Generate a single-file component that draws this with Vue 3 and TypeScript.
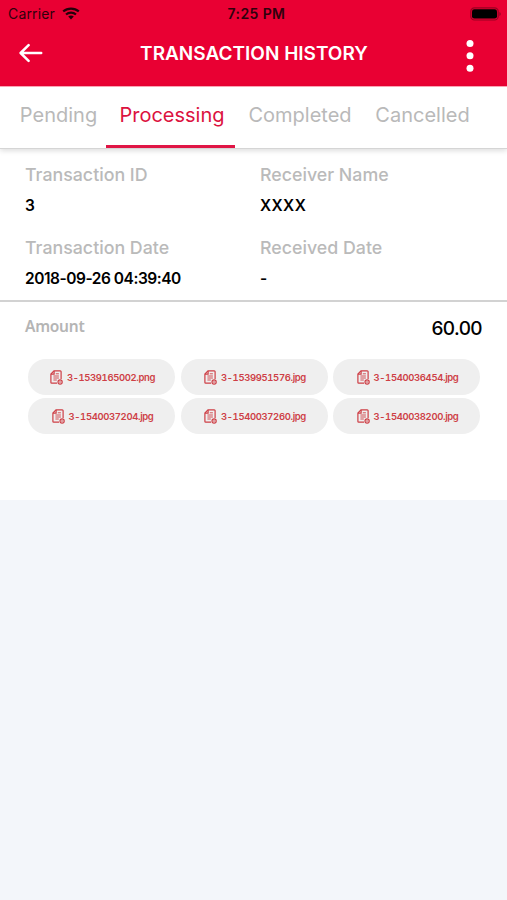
<script setup lang="ts">
import { ref } from 'vue'

interface Tab { key: string; label: string }
interface Field { key: string; label: string; value: string }

const tabs: Tab[] = [
  { key: 'pending', label: 'Pending' },
  { key: 'processing', label: 'Processing' },
  { key: 'completed', label: 'Completed' },
  { key: 'cancelled', label: 'Cancelled' },
]
const active = ref('processing')

const fields: Field[] = [
  { key: 'id', label: 'Transaction ID', value: '3' },
  { key: 'name', label: 'Receiver Name', value: 'XXXX' },
  { key: 'date', label: 'Transaction Date', value: '2018-09-26 04:39:40' },
  { key: 'received', label: 'Received Date', value: '-' },
]

const files: string[] = [
  '3-1539165002.png',
  '3-1539951576.jpg',
  '3-1540036454.jpg',
  '3-1540037204.jpg',
  '3-1540037260.jpg',
  '3-1540038200.jpg',
]
</script>

<template>
  <div class="screen">
    <header class="header">
      <div class="status">
        <div class="carrier">
          <span>Carrier</span>
          <svg class="wifi" viewBox="0 0 18 13" width="18" height="13">
            <path d="M1.2 4.4C5.6.6 12.4.6 16.8 4.4" />
            <path d="M4 7.5c2.8-2.5 7.2-2.5 10 0" />
            <path class="solid" d="M6.2 9.6c1.6-1.4 4-1.4 5.6 0L9 12.4z" />
          </svg>
        </div>
        <span class="clock">7:25 PM</span>
        <svg class="battery" viewBox="0 0 32 14" width="32" height="14">
          <rect class="case" x="0.8" y="0.8" width="27.4" height="12.2" rx="3.6" />
          <rect x="2" y="2.2" width="25" height="9.4" rx="2.4" />
          <path class="tip" d="M29.4 5v4c1.8-.6 1.8-3.4 0-4z" />
        </svg>
      </div>
      <div class="bar">
        <button class="icon-btn" aria-label="Back">
          <svg viewBox="0 0 24 20" width="24" height="20">
            <path class="arrow" d="M22.2 10H2M9.6 2.2 1.6 10l8 7.8" />
          </svg>
        </button>
        <h1>TRANSACTION HISTORY</h1>
        <button class="icon-btn more" aria-label="More">
          <svg viewBox="0 0 8 34" width="8" height="34">
            <circle cx="4" cy="4.5" r="3.5" />
            <circle cx="4" cy="16.8" r="3.5" />
            <circle cx="4" cy="29.3" r="3.5" />
          </svg>
        </button>
      </div>
    </header>

    <nav class="tabs">
      <button
        v-for="tab in tabs"
        :key="tab.key"
        :class="['tab', tab.key, { active: active === tab.key }]"
        @click="active = tab.key"
      >
        <span>{{ tab.label }}</span>
      </button>
    </nav>

    <main class="card">
      <dl class="details">
        <div v-for="field in fields" :key="field.key" :class="['field', field.key]">
          <dt><span>{{ field.label }}</span></dt>
          <dd><span>{{ field.value }}</span></dd>
        </div>
      </dl>
      <div class="amount">
        <span class="amount-label">Amount</span>
        <span class="amount-value">60.00</span>
      </div>
      <ul class="files">
        <li v-for="file in files" :key="file" class="file">
          <svg viewBox="0 0 13 15" width="13" height="15">
            <path d="M11.1 9V1.7c0-.5-.3-.8-.8-.8H4L.9 4v8.4c0 .5.3.8.8.8H7" />
            <path d="M4.1 1v3.1H1" />
            <path class="thin" d="M5.8 3.8h3.1M3.4 6h5.5M3.4 8h5.5M3.4 10h3.4" />
            <circle cx="10.1" cy="12" r="2.1" />
            <path class="thin" d="M9 12h2.2" />
          </svg>
          <span>{{ file }}</span>
        </li>
      </ul>
    </main>
  </div>
</template>

<style>
body {
  background: #f3f6fa;
}
</style>

<style scoped>
.screen {
  width: 507px;
  min-height: 900px;
  background: #f3f6fa;
  font-family: Inter, "Liberation Sans", sans-serif;
  color: #000;
}
button {
  border: 0;
  padding: 0;
  background: none;
  font: inherit;
  color: inherit;
}
svg {
  display: block;
  flex: none;
}
.header {
  height: 86px;
  background: #e90033;
  box-sizing: border-box;
}
.status {
  display: grid;
  grid-template-columns: 1fr auto 1fr;
  align-items: center;
  height: 27px;
  padding: 0 5px 0 8px;
  color: #30000c;
}
.carrier {
  display: flex;
  align-items: center;
  gap: 7px;
  font-size: 14px;
  letter-spacing: 0.15px;
}
.wifi {
  fill: none;
  stroke: #24000a;
  stroke-width: 2.2;
}
.wifi .solid {
  fill: #24000a;
  stroke: none;
}
.clock {
  padding-left: 3px;
  font-size: 14px;
  font-weight: 600;
  letter-spacing: 0.4px;
}
.battery {
  justify-self: end;
}
.battery .case {
  fill: none;
  stroke: #9a0022;
  stroke-width: 1.2;
}
.battery .tip {
  fill: #9a0022;
}
.bar {
  display: grid;
  grid-template-columns: 24px 1fr 24px;
  align-items: center;
  height: 52px;
  padding: 0 18px 0 19px;
}
.bar h1 {
  margin: 0;
  padding-top: 2px;
  text-align: center;
  font-size: 19px;
  line-height: 24px;
  font-weight: 600;
  color: #fff;
}
.arrow {
  fill: none;
  stroke: #fff;
  stroke-width: 2.5;
  stroke-linecap: round;
  stroke-linejoin: round;
}
.more {
  justify-self: end;
  padding-top: 5px;
  padding-right: 15px;
  fill: #fff;
}
.tabs {
  display: flex;
  position: relative;
  height: 63px;
  padding-left: 6px;
  box-sizing: border-box;
  background: #fff;
  border-top: 1px solid #fba3b3;
  border-bottom: 1px solid #d5d5d5;
  box-shadow: 0 2px 5px rgba(0, 0, 0, 0.13);
  font-size: 20px;
  color: #b9b9b9;
}
.tab {
  height: 61px;
  padding-bottom: 2px;
  border-bottom: 3px solid transparent;
  box-sizing: border-box;
  white-space: nowrap;
}
.pending { width: 100px; padding-left: 5px; }
.processing { width: 129px; padding-left: 3px; }
.completed { width: 130px; }
.cancelled { width: 115px; }
.tab.active {
  color: #dc1240;
  border-bottom-color: #e01545;
}
.card {
  height: 351px;
  background: #fff;
}
.details {
  display: grid;
  grid-template-columns: 235px 1fr;
  align-content: start;
  row-gap: 12px;
  height: 153px;
  margin: 0;
  padding: 15px 0 0 25px;
  box-sizing: border-box;
  border-bottom: 2px solid #d2d2d2;
}
.field {
  height: 61px;
}
dt {
  font-size: 17.8px;
  line-height: 22px;
  font-weight: 500;
  color: #bababa;
}
dd {
  margin: 10px 0 0;
  font-size: 15.5px;
  line-height: 20px;
  font-weight: 600;
}
.date dd {
  letter-spacing: -0.47px;
}
.name dd {
  letter-spacing: 0.4px;
}
.amount {
  display: flex;
  align-items: center;
  justify-content: space-between;
  height: 52px;
  padding: 0 25px;
}
.amount-label {
  padding-bottom: 4px;
  font-family: "Noto Sans", sans-serif;
  font-size: 15.5px;
  font-weight: 600;
  letter-spacing: -0.25px;
  color: #b5b5b5;
}
.amount-value {
  font-size: 19px;
  font-weight: 500;
  letter-spacing: -0.6px;
}
.files {
  display: grid;
  grid-template-columns: repeat(3, 147px);
  gap: 3px 5.5px;
  margin: 0;
  padding: 5px 0 0 28px;
  list-style: none;
}
.file {
  display: flex;
  align-items: center;
  justify-content: center;
  gap: 4px;
  height: 36px;
  padding-left: 2px;
  box-sizing: border-box;
  border-radius: 18px;
  background: #efefef;
  color: #ce3f46;
  font-size: 9.5px;
  font-weight: 600;
  font-variant-numeric: tabular-nums;
  letter-spacing: -0.36px;
  white-space: nowrap;
}
.file svg {
  fill: none;
  stroke: #ce3f46;
  stroke-width: 1.2;
}
.file .thin {
  stroke-width: 0.9;
}
.file span {
  padding-top: 1px;
}
</style>
